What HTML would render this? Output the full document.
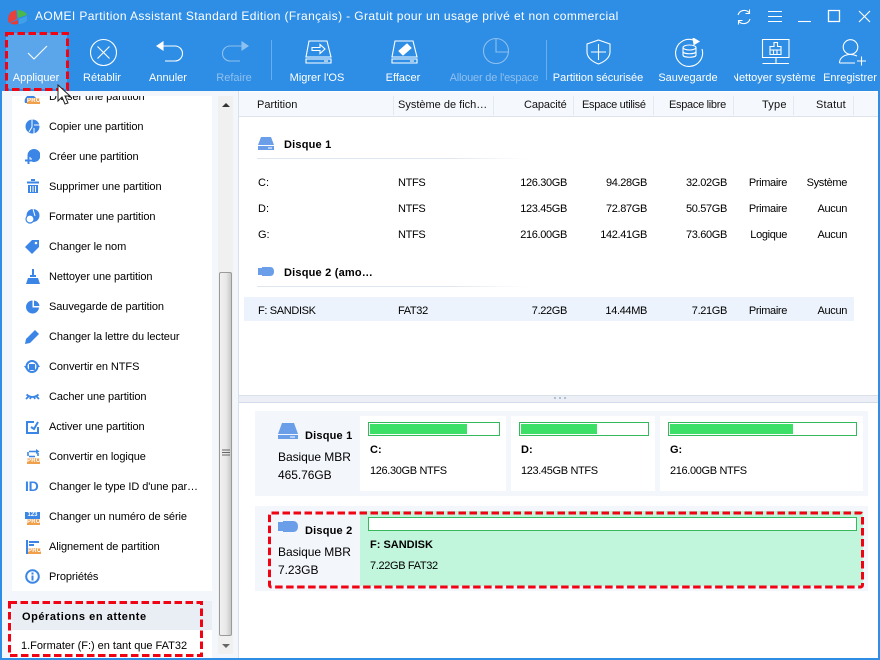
<!DOCTYPE html>
<html lang="fr"><head><meta charset="utf-8"><title>AOMEI Partition Assistant</title>
<style>
html,body{margin:0;padding:0;width:880px;height:660px;overflow:hidden;background:#fff}
body{font-family:"Liberation Sans",sans-serif;font-size:11px;color:#000;position:relative}
div,span,svg{position:absolute}
.t{white-space:nowrap;line-height:14px}
.w{color:#fff;text-align:center;width:100px;white-space:nowrap;line-height:14px;top:71px}
.d{color:#8fc0ef}
.r{text-align:right;white-space:nowrap;line-height:14px;letter-spacing:-.35px}
.n{letter-spacing:-.35px}
.b{font-weight:bold}
.l{letter-spacing:-.08px}
svg.i{fill:none;stroke:#fff;stroke-width:1.1}
svg.s{fill:#3a85e6;stroke:none}
.h{top:98px;white-space:nowrap;line-height:14px;color:#111}
.sep{top:96px;width:1px;height:19px;background:#e4e9f1}
.pro{background:#f0a04b;color:#fff;font-size:6px;font-weight:bold;line-height:6px;height:6px;width:13px;text-align:center;letter-spacing:.2px;overflow:hidden}
</style></head><body>
<div style="left:0;top:0;width:880px;height:91px;background:#2e8de4"></div>
<div style="left:0;top:91px;width:2px;height:569px;background:#2e8de4"></div>
<div style="left:878px;top:91px;width:2px;height:569px;background:#2e8de4"></div>
<div style="left:0;top:658px;width:880px;height:2px;background:#2e8de4"></div>

<svg style="left:8px;top:9px" width="20" height="16" viewBox="0 0 20 16"><path d="M8 1L3 3C1 5 0 8 0 11L1 14L9 10Z" fill="#e8413c"/><path d="M9 1.500C13 .5 18 3 19 6L10 9Z" fill="#4ab84c"/><path d="M11 10L19 7V11C18 14 14 15 11 15Z" fill="#3f9fe8"/><path d="M2 14C5 16 8 15.500 10 15V11Z" fill="#e63c36"/></svg>
<div class="t" style="left:35px;top:9px;color:#fff;font-size:12px;letter-spacing:.39px">AOMEI Partition Assistant Standard Edition (Français) - Gratuit pour un usage privé et non commercial</div>

<svg class="i" style="left:735px;top:8px" width="18" height="18" viewBox="0 0 18 18"><path d="M3 7A6.500 6.500 0 0 1 14 4.500M15 11A6.500 6.500 0 0 1 4 13.500"/><path d="M14.500 1.500V5.500H10.500M3.500 16.500V12.500H7.500"/></svg>
<svg class="i" style="left:767px;top:9px" width="16" height="15" viewBox="0 0 16 15"><path d="M1 2.500H15M1 7.500H15M1 12.500H15"/></svg>
<svg class="i" style="left:797px;top:9px" width="16" height="15" viewBox="0 0 16 15"><path d="M1 12.500H14"/></svg>
<svg class="i" style="left:826px;top:8px" width="15" height="15" viewBox="0 0 15 15"><path d="M2.500 2.500H13.500V13.500H2.500Z" stroke-width="1.300"/></svg>
<svg class="i" style="left:857px;top:9px" width="15" height="15" viewBox="0 0 15 15"><path d="M2 2L13 13M13 2L2 13"/></svg>

<div style="left:6px;top:33px;width:61px;height:56px;background:#5ba5ea"></div>
<svg style="left:5px;top:32px" width="64" height="59"><rect x="1.500" y="1.500" width="61" height="56" fill="none" stroke="#f00414" stroke-width="3" stroke-dasharray="7.500 3.500"/></svg>

<svg class="i" style="left:27px;top:44px" width="21" height="16" viewBox="0 0 21 16"><path d="M1 9L7 15L20 2"/></svg>
<svg class="i" style="left:89px;top:38px" width="30" height="30" viewBox="0 0 30 30"><circle cx="14.500" cy="14.500" r="13"/><path d="M8.500 8.500L20.500 20.500M20.500 8.500L8.500 20.500"/></svg>
<svg class="i" style="left:155px;top:41px" width="29" height="23" viewBox="0 0 29 23"><path d="M7 5H20A7.500 7.500 0 0 1 20 20H10"/><path d="M8 1L2 5L8 9Z" fill="#fff"/></svg>
<svg class="i" style="left:221px;top:41px;opacity:.45" width="29" height="23" viewBox="0 0 29 23"><path d="M22 5H9A7.500 7.500 0 0 0 9 20H19"/><path d="M21 1L27 5L21 9Z" fill="#fff"/></svg>
<div style="left:271px;top:40px;width:1px;height:40px;background:#6aaeed"></div>
<svg class="i" style="left:304px;top:40px" width="29" height="25" viewBox="0 0 29 25"><path d="M5 1H23L27 17H2ZM2 19H27V23H2Z"/><path d="M8 7.500H16V4.500L21 9L16 13.500V10.500H8Z"/><path d="M20 21H24"/></svg>
<svg class="i" style="left:390px;top:40px" width="29" height="25" viewBox="0 0 29 25"><path d="M5 1H23L27 17H2ZM2 19H27V23H2Z"/><path d="M9 11L17 4L21 8L13 15Z" fill="#fff"/><path d="M20 21H24"/></svg>
<svg class="i" style="left:482px;top:37px;opacity:.45" width="28" height="28" viewBox="0 0 28 28"><circle cx="14" cy="14" r="12.500"/><path d="M14 2V15H26"/></svg>
<div style="left:546px;top:40px;width:1px;height:40px;background:#6aaeed"></div>
<svg class="i" style="left:586px;top:39px" width="25" height="27" viewBox="0 0 25 27"><path d="M12.500 1L24 5V13C24 19 18 23 12.500 25C7 23 1 19 1 13V5Z"/><path d="M12.500 5V21M5 13H20"/></svg>
<svg class="i" style="left:674px;top:38px" width="30" height="30" viewBox="0 0 30 30"><path d="M19 2A13.500 13.500 0 1 0 28 11"/><path d="M19 0L25 3.500L20 6.500Z" fill="#fff"/><ellipse cx="15.500" cy="9.500" rx="6.500" ry="2.500"/><path d="M9 9.500V17C9 20 22 20 22 17V9.500M9 13.500C9 16.500 22 16.500 22 13.500"/></svg>
<svg class="i" style="left:761px;top:38px" width="30" height="28" viewBox="0 0 30 28"><path d="M1.500 1.500H28V19.500H1.500ZM15 19.500V25M1.500 25.500H28"/><path d="M13 4.500H16.500V8.500H20V16.500H9V8.500H13ZM9 12H20M12.500 12V16.500M16 12V16.500"/></svg>
<svg class="i" style="left:838px;top:38px" width="30" height="28" viewBox="0 0 30 28"><circle cx="12.500" cy="9" r="7.300"/><path d="M1.500 25C1.500 20 6 16.500 12.500 16.500C15 16.500 17 17 19 18M1.500 25H17M19 23H28M23.500 18.500V27.500"/></svg>

<div class="w" style="left:-14px">Appliquer</div>
<div class="w" style="left:52px">Rétablir</div>
<div class="w" style="left:118px">Annuler</div>
<div class="w d" style="left:184px">Refaire</div>
<div class="w" style="left:267px">Migrer l'OS</div>
<div class="w" style="left:353px">Effacer</div>
<div class="w d" style="left:444px;letter-spacing:-.2px">Allouer de l'espace</div>
<div class="w" style="left:548px">Partition sécurisée</div>
<div class="w" style="left:638px">Sauvegarde</div>
<div class="w" style="left:734px;width:81px;overflow:hidden;text-align:left;text-indent:-3px">Nettoyer système</div>
<div class="w" style="left:800px">Enregistrer</div>

<div style="left:2px;top:91px;width:236px;height:567px;background:#f3f6fb"></div>
<div style="left:238px;top:91px;width:1px;height:567px;background:#d8e0ec"></div>
<div style="left:12px;top:96px;width:200px;height:495px;background:#fff"></div>
<div style="left:218px;top:96px;width:15px;height:558px;background:#f0f0f0"></div>
<div style="left:219px;top:272px;width:13px;height:364px;background:linear-gradient(90deg,#f1f1f1,#e8e8e8 55%,#c9c9c9);border:1px solid #9a9a9a;box-sizing:border-box;border-radius:2px"></div>
<svg style="left:222px;top:102px" width="9" height="6"><path d="M0 5H8L4 1Z" fill="#333"/></svg>
<svg style="left:222px;top:643px" width="9" height="6"><path d="M0 1H8L4 5Z" fill="#666"/></svg>
<svg style="left:222px;top:449px" width="9" height="9"><path d="M0 1H8M0 3.500H8M0 6H8" stroke="#666"/></svg>

<div style="left:12px;top:96px;width:200px;height:494px;overflow:hidden">
<div class="t l" style="left:37px;top:-6px">Diviser une partition</div>
<div class="t l" style="left:37px;top:24px">Copier une partition</div>
<div class="t l" style="left:37px;top:54px">Créer une partition</div>
<div class="t l" style="left:37px;top:84px">Supprimer une partition</div>
<div class="t l" style="left:37px;top:114px">Formater une partition</div>
<div class="t l" style="left:37px;top:144px">Changer le nom</div>
<div class="t l" style="left:37px;top:174px">Nettoyer une partition</div>
<div class="t l" style="left:37px;top:204px">Sauvegarde de partition</div>
<div class="t l" style="left:37px;top:234px">Changer la lettre du lecteur</div>
<div class="t l" style="left:37px;top:264px">Convertir en NTFS</div>
<div class="t l" style="left:37px;top:294px">Cacher une partition</div>
<div class="t l" style="left:37px;top:324px">Activer une partition</div>
<div class="t l" style="left:37px;top:354px">Convertir en logique</div>
<div class="t l" style="left:37px;top:384px">Changer le type ID d'une par…</div>
<div class="t l" style="left:37px;top:414px">Changer un numéro de série</div>
<div class="t l" style="left:37px;top:444px">Alignement de partition</div>
<div class="t l" style="left:37px;top:474px">Propriétés</div>
</div>

<svg class="s" style="left:24px;top:96px" width="17" height="8"><path d="M1 7A6 6 0 0 1 10 0L12 2L8 7Z"/></svg>
<div class="pro" style="left:27px;top:98px">PRO</div>
<svg class="s" style="left:25px;top:119px" width="15" height="15"><circle cx="7.500" cy="7.500" r="7"/><path d="M7 0V8L4 13M9 6H15M9 9V15" stroke="#fff" fill="none"/></svg>
<svg class="s" style="left:25px;top:149px" width="15" height="15"><circle cx="9" cy="6.500" r="6.500"/><path d="M0 11.500H7M3.500 8V15" stroke="#fff" stroke-width="4" fill="none"/><path d="M0 11.500H7M3.500 8V15" stroke="#3a85e6" stroke-width="2" fill="none"/></svg>
<svg class="s" style="left:27px;top:179px" width="12" height="14"><path d="M0 2.500H12V4.500H0ZM4 0H8V2H4ZM1 6H11V14H1Z"/><path d="M3.500 7V13M6 7V13M8.500 7V13" stroke="#fff" fill="none"/></svg>
<svg class="s" style="left:25px;top:209px" width="15" height="15"><circle cx="8" cy="6.500" r="6.500"/><circle cx="5" cy="10" r="4" fill="#fff" stroke="#3a85e6" stroke-width="1.200"/><path d="M8 0L10 7" stroke="#fff"/></svg>
<svg class="s" style="left:25px;top:239px" width="15" height="15"><path d="M7 1H14V8L7 15L0 8Z"/><circle cx="11" cy="4" r="1.300" fill="#fff"/></svg>
<svg class="s" style="left:26px;top:269px" width="14" height="15"><path d="M6 0H8V6H6ZM4 6H10V8H4ZM2 9H12L14 15H0Z"/></svg>
<svg class="s" style="left:26px;top:300px" width="14" height="14"><path d="M6.500 .5A6.500 6.500 0 1 0 13 7.500H6.500Z"/><path d="M8 .5A6 6 0 0 1 13.500 6H8Z"/></svg>
<svg class="s" style="left:25px;top:329px" width="15" height="15"><path d="M10 1L14 5L5 14L0 15L1 10Z"/></svg>
<svg class="s" style="left:24px;top:359px" width="16" height="15"><circle cx="8" cy="7.500" r="5.500" fill="none" stroke="#3a85e6" stroke-width="2"/><rect x="5" y="5" width="6" height="6"/><path d="M0 7H4L2 10ZM12 8H16L14 5Z"/></svg>
<svg style="left:25px;top:393px" width="15" height="8"><path d="M1.500 1.500Q7.500 6.500 13.500 1.500M1 6L3.500 3.500M14 6L11.500 3.500M5 6L6 4M10 6L9 4" fill="none" stroke="#3a85e6" stroke-width="1.800"/></svg>
<svg class="s" style="left:26px;top:420px" width="13" height="14"><path d="M1 2H8M1 1V13H12V7M5 7L8 9L12 2" fill="none" stroke="#3a85e6" stroke-width="2"/></svg>
<svg style="left:26px;top:449px" width="14" height="10"><path d="M3 2.500H11M3 7.500H9M2 7V3M12 7V4" fill="none" stroke="#3a85e6" stroke-width="1.600"/><path d="M10 0L13.500 2.500L10 5Z" fill="#3a85e6"/></svg>
<div class="pro" style="left:27px;top:458px">PRO</div>
<div class="t b" style="left:25px;top:479px;color:#3a85e6;font-size:14px;letter-spacing:-.3px">ID</div>
<div style="left:25px;top:512px;width:15px;height:7px;background:#3a85e6;color:#fff;font-size:6px;font-weight:bold;line-height:7px;text-align:center;overflow:hidden">123</div>
<div class="pro" style="left:27px;top:519px">PRO</div>
<svg class="s" style="left:26px;top:540px" width="15" height="14"><path d="M0 0H2V14H0ZM3 1H13V3H3ZM3 4H8V6H3Z"/></svg>
<div class="pro" style="left:28px;top:548px">PRO</div>
<svg style="left:25px;top:569px" width="15" height="15"><circle cx="7.500" cy="7.500" r="6.300" fill="none" stroke="#3a85e6" stroke-width="2"/><path d="M6.500 3.500H8.500V5.500H6.500ZM6.500 6.500H8.500V11.500H6.500Z" fill="#3a85e6"/></svg>

<div style="left:12px;top:601px;width:200px;height:29px;background:#e9edf4"></div>
<div style="left:12px;top:630px;width:200px;height:28px;background:#fff"></div>
<div class="t b" style="left:22px;top:610px;letter-spacing:.55px">Opérations en attente</div>
<div class="t" style="left:21px;top:639px;letter-spacing:-.02px">1.Formater (F:) en tant que FAT32</div>
<svg style="left:8px;top:601px" width="196" height="56"><rect x="1.500" y="1.500" width="192" height="53" fill="none" stroke="#f00414" stroke-width="3" stroke-dasharray="7.500 3.500"/></svg>

<svg style="left:56px;top:84px" width="16" height="22"><path d="M2 1V17L6 13L9 20L12 19L9 12H14Z" fill="#fff" stroke="#222"/></svg>

<div style="left:239px;top:92px;width:639px;height:24px;background:#f5f8fc;border-bottom:1px solid #dde4ee;box-sizing:content-box"></div>
<div class="h" style="left:257px">Partition</div>
<div class="sep" style="left:393px"></div>
<div class="h" style="left:398px">Système de fich…</div>
<div class="sep" style="left:493px"></div>
<div class="h" style="left:524px;letter-spacing:-.1px">Capacité</div>
<div class="sep" style="left:573px"></div>
<div class="h" style="left:582px;letter-spacing:-.3px">Espace utilisé</div>
<div class="sep" style="left:653px"></div>
<div class="h" style="left:669px;letter-spacing:-.3px">Espace libre</div>
<div class="sep" style="left:733px"></div>
<div class="h" style="left:762px;letter-spacing:.2px">Type</div>
<div class="sep" style="left:793px"></div>
<div class="h" style="left:816px;letter-spacing:.2px">Statut</div>
<div class="sep" style="left:853px"></div>

<svg style="left:258px;top:137px" width="16" height="13"><path d="M3 0H13L16 8H0Z" fill="#6a9ee8"/><path d="M0 9H16V13H0Z" fill="#6a9ee8"/><path d="M10 11H14" stroke="#fff"/></svg>
<div class="t b" style="left:284px;top:138px;letter-spacing:.2px">Disque 1</div>
<div style="left:257px;top:158px;width:270px;height:1px;background:linear-gradient(90deg,#dfe5ee,#dfe5ee 70%,#fff)"></div>
<svg style="left:258px;top:267px" width="16" height="9"><path d="M0 1H4V0H12C15 0 16 2 16 4.500S15 9 12 9H4V8H0Z" fill="#6a9ee8"/></svg>
<div class="t b" style="left:284px;top:266px;letter-spacing:.2px">Disque 2 (amo…</div>
<div style="left:257px;top:286px;width:270px;height:1px;background:linear-gradient(90deg,#dfe5ee,#dfe5ee 70%,#fff)"></div>
<div style="left:244px;top:297px;width:610px;height:24px;background:#ecf3fd"></div>

<div class="t" style="left:258px;top:176px">C:</div><div class="t n" style="left:398px;top:176px">NTFS</div><div class="r" style="left:480px;width:87px;top:176px">126.30GB</div><div class="r" style="left:560px;width:87px;top:176px">94.28GB</div><div class="r" style="left:640px;width:87px;top:176px">32.02GB</div><div class="r" style="left:700px;width:87px;top:176px">Primaire</div><div class="r" style="left:760px;width:87px;top:176px">Système</div>
<div class="t" style="left:258px;top:202px">D:</div><div class="t n" style="left:398px;top:202px">NTFS</div><div class="r" style="left:480px;width:87px;top:202px">123.45GB</div><div class="r" style="left:560px;width:87px;top:202px">72.87GB</div><div class="r" style="left:640px;width:87px;top:202px">50.57GB</div><div class="r" style="left:700px;width:87px;top:202px">Primaire</div><div class="r" style="left:760px;width:87px;top:202px">Aucun</div>
<div class="t" style="left:258px;top:228px">G:</div><div class="t n" style="left:398px;top:228px">NTFS</div><div class="r" style="left:480px;width:87px;top:228px">216.00GB</div><div class="r" style="left:560px;width:87px;top:228px">142.41GB</div><div class="r" style="left:640px;width:87px;top:228px">73.60GB</div><div class="r" style="left:700px;width:87px;top:228px">Logique</div><div class="r" style="left:760px;width:87px;top:228px">Aucun</div>
<div class="t n" style="left:258px;top:304px">F: SANDISK</div><div class="t n" style="left:398px;top:304px">FAT32</div><div class="r" style="left:480px;width:87px;top:304px">7.22GB</div><div class="r" style="left:560px;width:87px;top:304px">14.44MB</div><div class="r" style="left:640px;width:87px;top:304px">7.21GB</div><div class="r" style="left:700px;width:87px;top:304px">Primaire</div><div class="r" style="left:760px;width:87px;top:304px">Aucun</div>

<div style="left:239px;top:395px;width:639px;height:6px;background:#ecf0f6;border-top:1px solid #d8e0ec;border-bottom:1px solid #d3dcea"></div>
<div style="left:554px;top:397px;width:2px;height:2px;background:#b5c0cf"></div>
<div style="left:559px;top:397px;width:2px;height:2px;background:#b5c0cf"></div>
<div style="left:564px;top:397px;width:2px;height:2px;background:#b5c0cf"></div>

<div style="left:255px;top:411px;width:613px;height:85px;background:#f3f6fb"></div>
<div style="left:255px;top:506px;width:613px;height:85px;background:#f3f6fb"></div>
<svg style="left:278px;top:423px" width="20" height="17"><path d="M4 0H16L20 11H0Z" fill="#6a9ee8"/><path d="M0 12H20V16H0Z" fill="#6a9ee8"/><path d="M12 14H17" stroke="#fff"/></svg>
<div class="t b" style="left:305px;top:429px;letter-spacing:.2px">Disque 1</div>
<div class="t" style="left:278px;top:450px;font-size:12px;letter-spacing:-.05px">Basique MBR</div>
<div class="t" style="left:278px;top:468px;font-size:12px;letter-spacing:-.05px">465.76GB</div>
<svg style="left:278px;top:521px" width="20" height="11"><path d="M0 1H5V0H15C19 0 20 3 20 5.500S19 11 15 11H5V10H0Z" fill="#6a9ee8"/></svg>
<div class="t b" style="left:305px;top:524px;letter-spacing:.2px">Disque 2</div>
<div class="t" style="left:278px;top:545px;font-size:12px;letter-spacing:-.05px">Basique MBR</div>
<div class="t" style="left:278px;top:563px;font-size:12px;letter-spacing:-.05px">7.23GB</div>

<div style="left:360px;top:416px;width:146px;height:75px;background:#fff"></div>
<div style="left:368px;top:422px;width:132px;height:14px;border:1px solid #36b85c;box-sizing:border-box;background:#fff"></div>
<div style="left:370px;top:424px;width:97px;height:10px;background:#3ce066"></div>
<div class="t b" style="left:370px;top:443px">C:</div><div class="t n" style="left:370px;top:464px">126.30GB NTFS</div>

<div style="left:511px;top:416px;width:144px;height:75px;background:#fff"></div>
<div style="left:519px;top:422px;width:130px;height:14px;border:1px solid #36b85c;box-sizing:border-box;background:#fff"></div>
<div style="left:521px;top:424px;width:76px;height:10px;background:#3ce066"></div>
<div class="t b" style="left:521px;top:443px">D:</div><div class="t n" style="left:521px;top:464px">123.45GB NTFS</div>

<div style="left:660px;top:416px;width:203px;height:75px;background:#fff"></div>
<div style="left:668px;top:422px;width:189px;height:14px;border:1px solid #36b85c;box-sizing:border-box;background:#fff"></div>
<div style="left:670px;top:424px;width:123px;height:10px;background:#3ce066"></div>
<div class="t b" style="left:670px;top:443px">G:</div><div class="t n" style="left:670px;top:464px">216.00GB NTFS</div>

<div style="left:360px;top:511px;width:503px;height:75px;background:#c2f6dc"></div>
<div style="left:368px;top:517px;width:489px;height:14px;border:1px solid #36b85c;box-sizing:border-box;background:#fff"></div>
<div class="t b" style="left:370px;top:538px">F: SANDISK</div><div class="t n" style="left:370px;top:559px">7.22GB FAT32</div>
<svg style="left:268px;top:511px" width="597" height="78"><rect x="1.500" y="2" width="593" height="74" rx="2" fill="none" stroke="#f00414" stroke-width="3" stroke-dasharray="7.500 3.500"/></svg>
</body></html>
